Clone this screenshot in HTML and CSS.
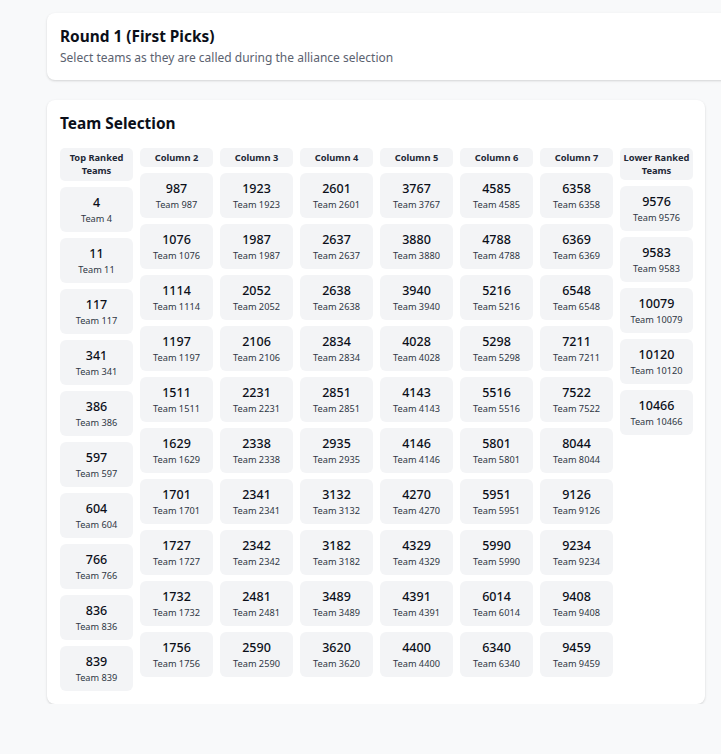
FILE: index.html
```html
<!DOCTYPE html>
<html lang="en">
<head>
<meta charset="utf-8">
<title>Round 1 (First Picks)</title>
<link rel="stylesheet" href="styles.css">
</head>
<body>
<main class="page">
  <section class="card header-card">
    <h1 class="title">Round 1 (First Picks)</h1>
    <p class="subtitle">Select teams as they are called during the alliance selection</p>
  </section>

  <section class="card selection-card">
    <h2 class="section-title">Team Selection</h2>
    <div class="grid">
      <div class="col">
        <div class="col-head">Top Ranked Teams</div>
        <div class="team"><span class="num">4</span><span class="name">Team 4</span></div>
        <div class="team"><span class="num">11</span><span class="name">Team 11</span></div>
        <div class="team"><span class="num">117</span><span class="name">Team 117</span></div>
        <div class="team"><span class="num">341</span><span class="name">Team 341</span></div>
        <div class="team"><span class="num">386</span><span class="name">Team 386</span></div>
        <div class="team"><span class="num">597</span><span class="name">Team 597</span></div>
        <div class="team"><span class="num">604</span><span class="name">Team 604</span></div>
        <div class="team"><span class="num">766</span><span class="name">Team 766</span></div>
        <div class="team"><span class="num">836</span><span class="name">Team 836</span></div>
        <div class="team"><span class="num">839</span><span class="name">Team 839</span></div>
      </div>
      <div class="col">
        <div class="col-head">Column 2</div>
        <div class="team"><span class="num">987</span><span class="name">Team 987</span></div>
        <div class="team"><span class="num">1076</span><span class="name">Team 1076</span></div>
        <div class="team"><span class="num">1114</span><span class="name">Team 1114</span></div>
        <div class="team"><span class="num">1197</span><span class="name">Team 1197</span></div>
        <div class="team"><span class="num">1511</span><span class="name">Team 1511</span></div>
        <div class="team"><span class="num">1629</span><span class="name">Team 1629</span></div>
        <div class="team"><span class="num">1701</span><span class="name">Team 1701</span></div>
        <div class="team"><span class="num">1727</span><span class="name">Team 1727</span></div>
        <div class="team"><span class="num">1732</span><span class="name">Team 1732</span></div>
        <div class="team"><span class="num">1756</span><span class="name">Team 1756</span></div>
      </div>
      <div class="col">
        <div class="col-head">Column 3</div>
        <div class="team"><span class="num">1923</span><span class="name">Team 1923</span></div>
        <div class="team"><span class="num">1987</span><span class="name">Team 1987</span></div>
        <div class="team"><span class="num">2052</span><span class="name">Team 2052</span></div>
        <div class="team"><span class="num">2106</span><span class="name">Team 2106</span></div>
        <div class="team"><span class="num">2231</span><span class="name">Team 2231</span></div>
        <div class="team"><span class="num">2338</span><span class="name">Team 2338</span></div>
        <div class="team"><span class="num">2341</span><span class="name">Team 2341</span></div>
        <div class="team"><span class="num">2342</span><span class="name">Team 2342</span></div>
        <div class="team"><span class="num">2481</span><span class="name">Team 2481</span></div>
        <div class="team"><span class="num">2590</span><span class="name">Team 2590</span></div>
      </div>
      <div class="col">
        <div class="col-head">Column 4</div>
        <div class="team"><span class="num">2601</span><span class="name">Team 2601</span></div>
        <div class="team"><span class="num">2637</span><span class="name">Team 2637</span></div>
        <div class="team"><span class="num">2638</span><span class="name">Team 2638</span></div>
        <div class="team"><span class="num">2834</span><span class="name">Team 2834</span></div>
        <div class="team"><span class="num">2851</span><span class="name">Team 2851</span></div>
        <div class="team"><span class="num">2935</span><span class="name">Team 2935</span></div>
        <div class="team"><span class="num">3132</span><span class="name">Team 3132</span></div>
        <div class="team"><span class="num">3182</span><span class="name">Team 3182</span></div>
        <div class="team"><span class="num">3489</span><span class="name">Team 3489</span></div>
        <div class="team"><span class="num">3620</span><span class="name">Team 3620</span></div>
      </div>
      <div class="col">
        <div class="col-head">Column 5</div>
        <div class="team"><span class="num">3767</span><span class="name">Team 3767</span></div>
        <div class="team"><span class="num">3880</span><span class="name">Team 3880</span></div>
        <div class="team"><span class="num">3940</span><span class="name">Team 3940</span></div>
        <div class="team"><span class="num">4028</span><span class="name">Team 4028</span></div>
        <div class="team"><span class="num">4143</span><span class="name">Team 4143</span></div>
        <div class="team"><span class="num">4146</span><span class="name">Team 4146</span></div>
        <div class="team"><span class="num">4270</span><span class="name">Team 4270</span></div>
        <div class="team"><span class="num">4329</span><span class="name">Team 4329</span></div>
        <div class="team"><span class="num">4391</span><span class="name">Team 4391</span></div>
        <div class="team"><span class="num">4400</span><span class="name">Team 4400</span></div>
      </div>
      <div class="col">
        <div class="col-head">Column 6</div>
        <div class="team"><span class="num">4585</span><span class="name">Team 4585</span></div>
        <div class="team"><span class="num">4788</span><span class="name">Team 4788</span></div>
        <div class="team"><span class="num">5216</span><span class="name">Team 5216</span></div>
        <div class="team"><span class="num">5298</span><span class="name">Team 5298</span></div>
        <div class="team"><span class="num">5516</span><span class="name">Team 5516</span></div>
        <div class="team"><span class="num">5801</span><span class="name">Team 5801</span></div>
        <div class="team"><span class="num">5951</span><span class="name">Team 5951</span></div>
        <div class="team"><span class="num">5990</span><span class="name">Team 5990</span></div>
        <div class="team"><span class="num">6014</span><span class="name">Team 6014</span></div>
        <div class="team"><span class="num">6340</span><span class="name">Team 6340</span></div>
      </div>
      <div class="col">
        <div class="col-head">Column 7</div>
        <div class="team"><span class="num">6358</span><span class="name">Team 6358</span></div>
        <div class="team"><span class="num">6369</span><span class="name">Team 6369</span></div>
        <div class="team"><span class="num">6548</span><span class="name">Team 6548</span></div>
        <div class="team"><span class="num">7211</span><span class="name">Team 7211</span></div>
        <div class="team"><span class="num">7522</span><span class="name">Team 7522</span></div>
        <div class="team"><span class="num">8044</span><span class="name">Team 8044</span></div>
        <div class="team"><span class="num">9126</span><span class="name">Team 9126</span></div>
        <div class="team"><span class="num">9234</span><span class="name">Team 9234</span></div>
        <div class="team"><span class="num">9408</span><span class="name">Team 9408</span></div>
        <div class="team"><span class="num">9459</span><span class="name">Team 9459</span></div>
      </div>
      <div class="col">
        <div class="col-head">Lower Ranked Teams</div>
        <div class="team"><span class="num">9576</span><span class="name">Team 9576</span></div>
        <div class="team"><span class="num">9583</span><span class="name">Team 9583</span></div>
        <div class="team"><span class="num">10079</span><span class="name">Team 10079</span></div>
        <div class="team"><span class="num">10120</span><span class="name">Team 10120</span></div>
        <div class="team"><span class="num">10466</span><span class="name">Team 10466</span></div>
      </div>
    </div>
  </section>
</main>
</body>
</html>
```

FILE: styles.css
```css
html, body {
  margin: 0;
  padding: 0;
  background: #f8f9fa;
  overflow: hidden;
}

body {
  font-family: "Noto Sans", "Open Sans", sans-serif;
  color: #111827;
}

.page {
  padding: 13px 0 0 47px;
  display: flex;
  flex-direction: column;
  gap: 20px;
  align-items: flex-start;
}

.card {
  background: #ffffff;
  border-radius: 8px;
  box-shadow: 0 1px 3px rgba(0, 0, 0, 0.10), 0 1px 2px rgba(0, 0, 0, 0.06);
  box-sizing: border-box;
  padding: 13px;
}

.header-card {
  width: 700px;
  height: 67px;
  padding-top: 14px;
}

.title {
  margin: 0;
  font-size: 15.4px;
  line-height: 20px;
  font-weight: 700;
  color: #0b0f19;
}

.subtitle {
  margin: 1px 0 0;
  font-size: 12px;
  line-height: 19px;
  color: #5b6270;
}

.selection-card {
  width: 658px;
  padding-top: 14px;
  padding-bottom: 13px;
}

.section-title {
  margin: 0 0 14px;
  font-size: 15.4px;
  line-height: 20px;
  font-weight: 700;
  color: #0b0f19;
}

.grid {
  display: grid;
  grid-template-columns: repeat(8, 73px);
  column-gap: 7px;
  align-items: start;
}

.col {
  display: flex;
  flex-direction: column;
  gap: 6px;
}

.col-head {
  background: #f3f4f6;
  border-radius: 5px;
  padding: 3px 1px;
  font-size: 9.3px;
  line-height: 13px;
  font-weight: 700;
  text-align: center;
  color: #1f2937;
}

.col:first-child .col-head {
  padding-bottom: 4px;
}

.team {
  background: #f3f4f6;
  border-radius: 6px;
  height: 45px;
  box-sizing: border-box;
  padding-top: 1px;
  display: flex;
  flex-direction: column;
  align-items: center;
  justify-content: center;
}

.num {
  font-size: 12.5px;
  line-height: 17px;
  font-weight: 500;
  color: #0b0f19;
}

.name {
  font-size: 9.2px;
  line-height: 15px;
  color: #2f3744;
}
```
